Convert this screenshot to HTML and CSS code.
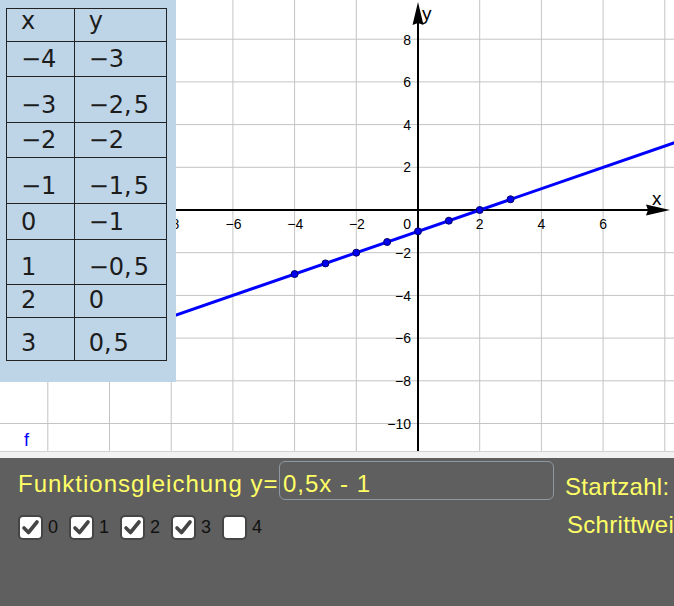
FILE: index.html
```html
<!DOCTYPE html>
<html lang="de">
<head>
<meta charset="utf-8">
<title>Funktionsgleichung</title>
<link rel="stylesheet" href="styles.css">
</head>
<body>
<div class="app">
  <div class="graph">
    <svg class="plot" width="674" height="451" viewBox="0 0 674 451" xmlns="http://www.w3.org/2000/svg">
      <g class="grid" stroke="#c4c4c4" stroke-width="1">
        <line x1="47.8" y1="0" x2="47.8" y2="451"/>
        <line x1="109.5" y1="0" x2="109.5" y2="451"/>
        <line x1="171.2" y1="0" x2="171.2" y2="451"/>
        <line x1="232.9" y1="0" x2="232.9" y2="451"/>
        <line x1="294.6" y1="0" x2="294.6" y2="451"/>
        <line x1="356.3" y1="0" x2="356.3" y2="451"/>
        <line x1="479.7" y1="0" x2="479.7" y2="451"/>
        <line x1="541.4" y1="0" x2="541.4" y2="451"/>
        <line x1="603.1" y1="0" x2="603.1" y2="451"/>
        <line x1="664.8" y1="0" x2="664.8" y2="451"/>
        <line x1="0" y1="39.2" x2="674" y2="39.2"/>
        <line x1="0" y1="81.9" x2="674" y2="81.9"/>
        <line x1="0" y1="124.6" x2="674" y2="124.6"/>
        <line x1="0" y1="167.3" x2="674" y2="167.3"/>
        <line x1="0" y1="252.7" x2="674" y2="252.7"/>
        <line x1="0" y1="295.4" x2="674" y2="295.4"/>
        <line x1="0" y1="338.1" x2="674" y2="338.1"/>
        <line x1="0" y1="380.8" x2="674" y2="380.8"/>
        <line x1="0" y1="423.5" x2="674" y2="423.5"/>
      </g>
      <g class="axes" stroke="#000" stroke-width="2">
        <line x1="0" y1="210" x2="650" y2="210"/>
        <line x1="418" y1="22" x2="418" y2="451"/>
      </g>
      <polygon points="418,2 423.5,25 418,23 412.5,25" fill="#000"/>
      <polygon points="670,210 646,204.5 648,210 646,215.5" fill="#000"/>
      <g class="ticks" font-family="Liberation Sans, Arial, sans-serif" font-size="14" fill="#000">
        <text x="171.2" y="229" text-anchor="middle">−8</text>
        <text x="233.5" y="229" text-anchor="middle">−6</text>
        <text x="295.2" y="229" text-anchor="middle">−4</text>
        <text x="356.9" y="229" text-anchor="middle">−2</text>
        <text x="411" y="229" text-anchor="end">0</text>
        <text x="479.7" y="229" text-anchor="middle">2</text>
        <text x="541.4" y="229" text-anchor="middle">4</text>
        <text x="603.1" y="229" text-anchor="middle">6</text>
        <text x="411" y="44.5" text-anchor="end">8</text>
        <text x="411" y="87" text-anchor="end">6</text>
        <text x="411" y="129.5" text-anchor="end">4</text>
        <text x="411" y="172.3" text-anchor="end">2</text>
        <text x="411" y="257.9" text-anchor="end">−2</text>
        <text x="411" y="300.5" text-anchor="end">−4</text>
        <text x="411" y="343.2" text-anchor="end">−6</text>
        <text x="411" y="385.9" text-anchor="end">−8</text>
        <text x="411" y="428.5" text-anchor="end">−10</text>
      </g>
      <g font-family="Liberation Sans, Arial, sans-serif" font-size="19" fill="#000">
        <text x="422" y="20">y</text>
        <text x="652" y="205">x</text>
      </g>
      <line x1="-13.9" y1="380.8" x2="695.7" y2="135.3" stroke="#0000ff" stroke-width="3"/>
      <g fill="#0000ee" stroke="#000066" stroke-width="1">
        <circle cx="294.6" cy="274.05" r="3.5"/>
        <circle cx="325.45" cy="263.4" r="3.5"/>
        <circle cx="356.3" cy="252.7" r="3.5"/>
        <circle cx="387.15" cy="242" r="3.5"/>
        <circle cx="418" cy="231.35" r="3.5"/>
        <circle cx="448.85" cy="220.7" r="3.5"/>
        <circle cx="479.7" cy="210" r="3.5"/>
        <circle cx="510.55" cy="199.3" r="3.5"/>
      </g>
      <text x="24" y="446" font-family="Liberation Sans, Arial, sans-serif" font-size="18" fill="#0000ff">f</text>
    </svg>
    <div class="table-panel">
      <table class="values">
        <tr class="r-head"><td class="c1 head">x</td><td class="c2 head">y</td></tr>
        <tr class="r-a"><td class="c1">−4</td><td class="c2">−3</td></tr>
        <tr class="r-b"><td class="c1">−3</td><td class="c2">−2<span class="cm">,</span>5</td></tr>
        <tr class="r-c"><td class="c1">−2</td><td class="c2">−2</td></tr>
        <tr class="r-d"><td class="c1">−1</td><td class="c2">−1<span class="cm">,</span>5</td></tr>
        <tr class="r-e"><td class="c1">0</td><td class="c2">−1</td></tr>
        <tr class="r-f"><td class="c1">1</td><td class="c2">−0<span class="cm">,</span>5</td></tr>
        <tr class="r-g"><td class="c1">2</td><td class="c2">0</td></tr>
        <tr class="r-h"><td class="c1">3</td><td class="c2">0<span class="cm">,</span>5</td></tr>
      </table>
    </div>
  </div>
  <div class="splitter"></div>
  <div class="controls">
    <div class="eq-row">
      <span class="eq-label">Funktionsgleichung y=</span>
      <div class="eq-input">0,5x - 1</div>
    </div>
    <div class="side">Startzahl:</div>
    <div class="checks">
      <label class="cb"><span class="box"><svg width="21" height="21" viewBox="0 0 21 21"><path d="M4 11 L8.5 15.5 L17 5" fill="none" stroke="#454545" stroke-width="3.6" stroke-linecap="round" stroke-linejoin="round"/></svg></span><span class="cb-text">0</span></label>
      <label class="cb"><span class="box"><svg width="21" height="21" viewBox="0 0 21 21"><path d="M4 11 L8.5 15.5 L17 5" fill="none" stroke="#454545" stroke-width="3.6" stroke-linecap="round" stroke-linejoin="round"/></svg></span><span class="cb-text">1</span></label>
      <label class="cb"><span class="box"><svg width="21" height="21" viewBox="0 0 21 21"><path d="M4 11 L8.5 15.5 L17 5" fill="none" stroke="#454545" stroke-width="3.6" stroke-linecap="round" stroke-linejoin="round"/></svg></span><span class="cb-text">2</span></label>
      <label class="cb"><span class="box"><svg width="21" height="21" viewBox="0 0 21 21"><path d="M4 11 L8.5 15.5 L17 5" fill="none" stroke="#454545" stroke-width="3.6" stroke-linecap="round" stroke-linejoin="round"/></svg></span><span class="cb-text">3</span></label>
      <label class="cb"><span class="box"></span><span class="cb-text">4</span></label>
    </div>
    <div class="side side-2">Schrittweite:</div>
  </div>
</div>
</body>
</html>
```

FILE: styles.css
```css
* { box-sizing: border-box; }

html, body {
  margin: 0;
  padding: 0;
  background: #ffffff;
  overflow: hidden;
}

.app {
  width: 674px;
  height: 606px;
  overflow: hidden;
  font-family: "Liberation Sans", Arial, sans-serif;
}

.graph {
  position: relative;
  width: 674px;
  height: 451px;
  background: #ffffff;
}

.plot {
  display: block;
}

.table-panel {
  position: absolute;
  left: 0;
  top: 0;
  width: 176px;
  height: 382px;
  background: #bed4e7;
  padding: 8px 0 0 6px;
}

.values {
  border-collapse: collapse;
  font-family: "DejaVu Sans", "Liberation Sans", sans-serif;
  font-size: 24px;
  line-height: 24px;
  color: #1c1c1c;
}

.values td {
  border: 1.6px solid #222222;
  vertical-align: bottom;
  padding: 0 0 5px 14px;
  white-space: nowrap;
}

.values td.head {
  padding-bottom: 8px;
}

.cm {
  margin-right: 2px;
}

.c1 { width: 67.7px; }
.c2 { width: 92.6px; }

.r-head td { height: 32.7px; }
.r-a td { height: 35.3px; }
.r-b td { height: 46px; }
.r-c td { height: 35px; }
.r-d td { height: 45.7px; }
.r-e td { height: 35.6px; }
.r-f td { height: 45.4px; }
.r-g td { height: 33px; }
.r-h td { height: 42.6px; }

.splitter {
  height: 7px;
  background: #f2f2f2;
  border-top: 1px solid #d2d2d2;
}

.controls {
  height: 148px;
  background: #5f5f5f;
  padding: 3px 0 0 18px;
  display: grid;
  grid-template-columns: 536px auto;
  grid-template-rows: 39px 26px;
  column-gap: 11px;
  row-gap: 14px;
  color: #ffff66;
  font-size: 24px;
  letter-spacing: 1px;
  white-space: nowrap;
}

.eq-row {
  display: flex;
  align-items: center;
}

.eq-label {
  margin-top: 6px;
  margin-left: 0;
}

.eq-input {
  margin-left: auto;
  width: 275px;
  height: 39px;
  border: 1px solid #8c99a4;
  border-radius: 6px;
  padding: 0 0 0 3px;
  line-height: 43px;
}

.side {
  line-height: 39px;
  padding-top: 6px;
  letter-spacing: 0.3px;
  overflow: hidden;
}

.side-2 {
  line-height: 26px;
  padding-top: 0;
  padding-left: 2px;
  margin-top: -2px;
}

.checks {
  display: flex;
  align-items: center;
}

.cb {
  display: flex;
  align-items: center;
  gap: 5px;
  margin-right: 11px;
}

.box {
  width: 25px;
  height: 25px;
  background: #ffffff;
  border: 2px solid #454545;
  border-radius: 5px;
  display: flex;
  align-items: center;
  justify-content: center;
}

.box svg { display: block; }

.cb-text {
  color: #111111;
  font-size: 18px;
  letter-spacing: 0;
  width: 10px;
}
```
